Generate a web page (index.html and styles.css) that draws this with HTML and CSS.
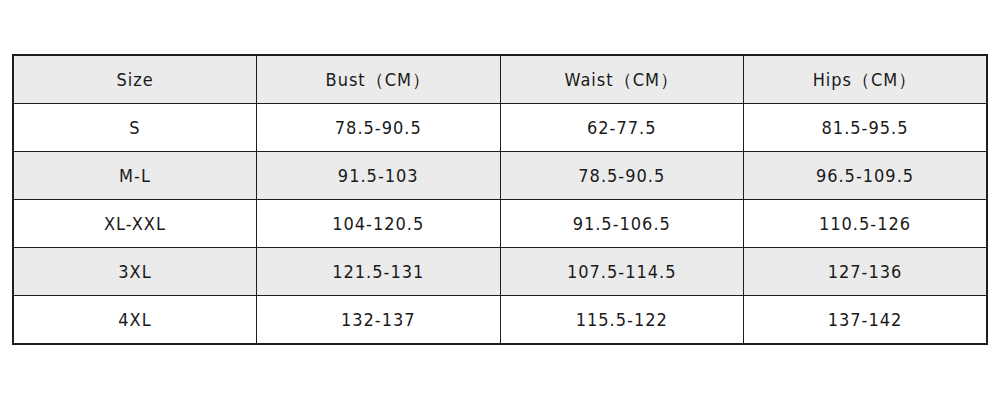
FILE: index.html
```html
<!DOCTYPE html>
<html>
<head>
<meta charset="utf-8">
<link rel="stylesheet" href="styles.css">
</head>
<body>
<div class="page">
<table class="size-table">
  <tr class="shade"><td>Size</td><td>Bust（CM）</td><td>Waist（CM）</td><td>Hips（CM）</td></tr>
  <tr><td>S</td><td>78.5-90.5</td><td>62-77.5</td><td>81.5-95.5</td></tr>
  <tr class="shade"><td>M-L</td><td>91.5-103</td><td>78.5-90.5</td><td>96.5-109.5</td></tr>
  <tr><td>XL-XXL</td><td>104-120.5</td><td>91.5-106.5</td><td>110.5-126</td></tr>
  <tr class="shade"><td>3XL</td><td>121.5-131</td><td>107.5-114.5</td><td>127-136</td></tr>
  <tr><td>4XL</td><td>132-137</td><td>115.5-122</td><td>137-142</td></tr>
</table>
</div>
</body>
</html>
```
FILE: styles.css
```css
html, body {
  margin: 0;
  background: #ffffff;
}
.page {
  padding: 54px 12px 0 12px;
}
.size-table {
  width: 976px;
  border-collapse: collapse;
  border: 2px solid #1e1e1e;
  table-layout: fixed;
  font-family: "DejaVu Sans Condensed", "DejaVu Sans", sans-serif;
  font-size: 18px;
  letter-spacing: 1px;
  color: #1a1a1a;
}
.size-table td {
  border: 1px solid #1e1e1e;
  height: 47px;
  padding: 0;
  text-align: center;
  vertical-align: middle;
}
.shade td {
  background: #ebebeb;
}
```
